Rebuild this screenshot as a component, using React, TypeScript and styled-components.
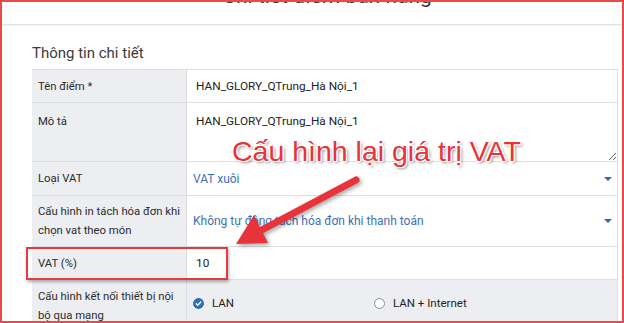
import React from 'react'
import styled, { createGlobalStyle } from 'styled-components'

const GlobalStyle = createGlobalStyle`
  html, body {
    margin: 0;
    padding: 0;
    background: #fff;
  }
  body {
    font-family: Roboto, 'Liberation Sans', sans-serif;
  }
`

const Frame = styled.div`
  position: relative;
  width: 624px;
  height: 323px;
  box-sizing: border-box;
  border: 2px solid #ef4848;
  overflow: hidden;
  background: #fff;
`

const Header = styled.header`
  height: 22px;
  display: flex;
  justify-content: center;
  padding-left: 30px;
  border-bottom: 1px solid #e3e3e3;
  box-shadow: 0 1px 2px rgba(0, 0, 0, 0.06);
  overflow: hidden;
`

const PageTitle = styled.h1`
  margin: -18px 0 0;
  font-size: 21px;
  line-height: 24px;
  font-weight: 400;
  color: #333;
  white-space: nowrap;
`

const Content = styled.main`
  padding: 0 4px 0 30px;
`

const SectionTitle = styled.h2`
  margin: 18px 0 6px;
  font-size: 15px;
  line-height: 20px;
  font-weight: 400;
  color: #3a3a3a;
`

const Table = styled.div`
  border-top: 1px solid #dedede;
  border-right: 1px solid #dedede;
`

const Row = styled.div<{ $h?: number; $muted?: boolean }>`
  display: grid;
  grid-template-columns: 155px 1fr;
  box-sizing: border-box;
  min-height: ${({ $h }) => ($h ? `${$h}px` : 'auto')};
  border-bottom: 1px solid #dedede;
  background: ${({ $muted }) => ($muted ? '#eceef1' : '#fff')};
`

const Label = styled.div<{ $top?: number }>`
  display: flex;
  align-items: ${({ $top }) => ($top ? 'flex-start' : 'center')};
  padding: ${({ $top }) => ($top ? `${$top}px 6px 0` : '0 6px')};
  background: #eceef1;
  border-right: 1px solid #dedede;
  font-size: 11.3px;
  line-height: 19px;
  color: #2b2b2b;
`

const Value = styled.div`
  display: flex;
  align-items: center;
  padding: 0 9px;
  font-size: 11.8px;
  color: #222;
`

const TextArea = styled.textarea`
  width: 100%;
  height: 100%;
  box-sizing: border-box;
  margin: 0;
  padding: 9px 9px;
  border: none;
  outline: none;
  resize: vertical;
  font-family: Roboto, 'Liberation Sans', sans-serif;
  font-size: 11.8px;
  line-height: 19px;
  color: #222;
  background: #fff;
`

const Select = styled.div`
  flex: 1;
  display: flex;
  align-items: center;
  justify-content: space-between;
  padding-left: 6px;
  margin-left: -9px;
  margin-right: -4px;
  font-size: 12px;
  color: #4170b6;
`

const Caret = styled.span`
  width: 0;
  height: 0;
  border-left: 4px solid transparent;
  border-right: 4px solid transparent;
  border-top: 4px solid #2d6cb5;
`

const RadioGroup = styled.div`
  display: grid;
  grid-template-columns: 181px auto;
  align-items: center;
  margin-left: -3px;
  margin-top: 16px;
  align-self: flex-start;
`

const RadioOption = styled.label`
  display: flex;
  align-items: center;
  gap: 8px;
  font-size: 11.5px;
  color: #222;
`

const RadioDot = styled.span<{ $checked?: boolean }>`
  width: 11px;
  height: 11px;
  box-sizing: border-box;
  border-radius: 50%;
  display: inline-flex;
  align-items: center;
  justify-content: center;
  background: ${({ $checked }) => ($checked ? '#2f6db4' : '#fff')};
  border: 1px solid ${({ $checked }) => ($checked ? '#2f6db4' : '#8d8d8d')};
`

const Highlight = styled.div`
  position: absolute;
  left: 24px;
  top: 245px;
  width: 202px;
  height: 33px;
  box-sizing: border-box;
  border: 2px solid #e9393f;
  box-shadow: 1px 2px 3px rgba(0, 0, 0, 0.3);
`

const Callout = styled.div`
  position: absolute;
  left: 230px;
  top: 135px;
  font-family: 'Liberation Sans', Arial, sans-serif;
  font-size: 28.5px;
  line-height: 29px;
  color: #e8333a;
  white-space: nowrap;
  text-shadow:
    1px 0 0 #fff, -1px 0 0 #fff, 0 1px 0 #fff, 0 -1px 0 #fff,
    1px 1px 0 #fff, -1px -1px 0 #fff, 1px -1px 0 #fff, -1px 1px 0 #fff,
    2px 2px 3px rgba(0, 0, 0, 0.45);
`

const ArrowLayer = styled.svg`
  position: absolute;
  left: -2px;
  top: -2px;
  pointer-events: none;
  filter: drop-shadow(2px 2px 2px rgba(0, 0, 0, 0.35));
`

const Check = () => (
  <svg width='7' height='7' viewBox='0 0 8 8'>
    <path d='M1.4 4.2 L3.2 5.9 L6.6 2.3' fill='none' stroke='#fff' strokeWidth='1.6' strokeLinecap='round' strokeLinejoin='round' />
  </svg>
)

const App = (): JSX.Element => {
  return (
    <Frame>
      <GlobalStyle />
      <Header>
        <PageTitle>Chi tiết điểm bán hàng</PageTitle>
      </Header>
      <Content>
        <SectionTitle>Thông tin chi tiết</SectionTitle>
        <Table>
          <Row $h={33}>
            <Label>Tên điểm *</Label>
            <Value>HAN_GLORY_QTrung_Hà Nội_1</Value>
          </Row>
          <Row $h={59}>
            <Label $top={9}>Mô tả</Label>
            <TextArea defaultValue='HAN_GLORY_QTrung_Hà Nội_1' />
          </Row>
          <Row $h={34}>
            <Label>Loại VAT</Label>
            <Value>
              <Select>
                VAT xuôi
                <Caret />
              </Select>
            </Value>
          </Row>
          <Row $h={51}>
            <Label>Cấu hình in tách hóa đơn khi chọn vat theo món</Label>
            <Value>
              <Select>
                Không tự động tách hóa đơn khi thanh toán
                <Caret />
              </Select>
            </Value>
          </Row>
          <Row $h={33}>
            <Label>VAT (%)</Label>
            <Value>10</Value>
          </Row>
          <Row $h={50} $muted>
            <Label $top={7}>Cấu hình kết nối thiết bị nội bộ qua mạng</Label>
            <Value>
              <RadioGroup>
                <RadioOption>
                  <RadioDot $checked><Check /></RadioDot>
                  LAN
                </RadioOption>
                <RadioOption>
                  <RadioDot />
                  LAN + Internet
                </RadioOption>
              </RadioGroup>
            </Value>
          </Row>
        </Table>
      </Content>

      <Highlight />
      <Callout>Cấu hình lại giá trị VAT</Callout>
      <ArrowLayer width='624' height='323' viewBox='0 0 624 323'>
        <line x1='356' y1='180' x2='256' y2='233' stroke='#e8333a' strokeWidth='7' strokeLinecap='round' />
        <polygon points='236,244 268,243 254,215' fill='#e8333a' />
      </ArrowLayer>
    </Frame>
  )
}

export default App
